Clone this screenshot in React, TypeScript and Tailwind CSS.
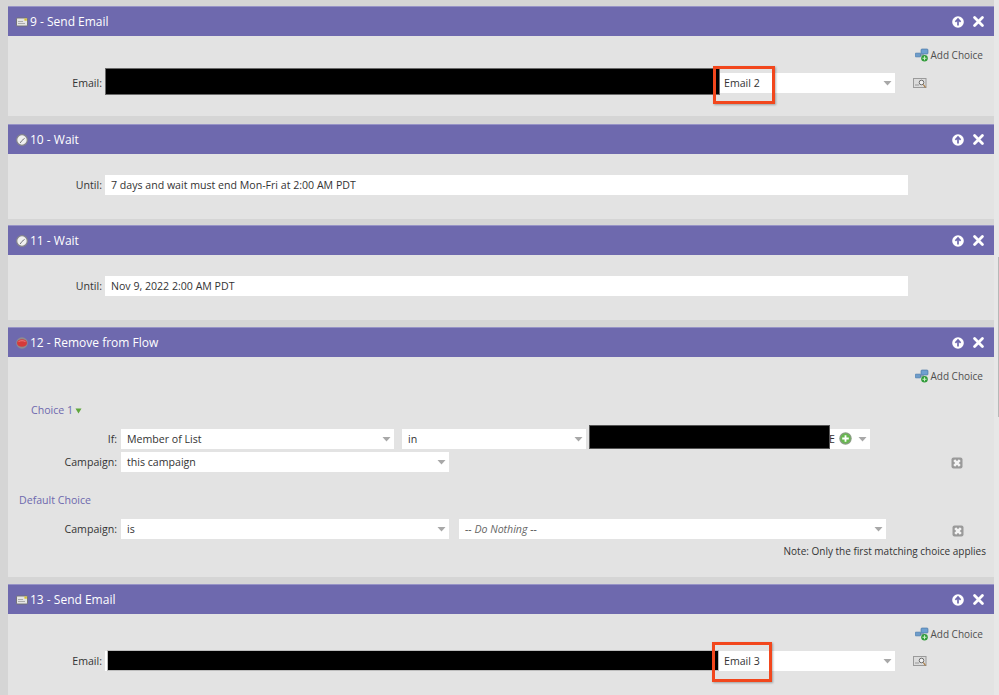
import React from "react";

const Caret = () => (
  <svg width="9" height="6" viewBox="0 0 9 6" className="shrink-0"><path d="M0.5 1h8L4.5 5.5z" fill="#a8a8a8" /></svg>
);

const MailIcon = () => (
  <svg width="12" height="10" viewBox="0 0 12 10" className="shrink-0">
    <rect x="0.5" y="1" width="11" height="8" rx="1" fill="#e4e4e4" stroke="#6f6f6f" strokeWidth="0.9" />
    <path d="M2 4.5h5M2 6.5h7" stroke="#9a9a9a" strokeWidth="0.8" />
    <rect x="8.4" y="1.5" width="2.4" height="2.2" fill="#d8c02e" />
  </svg>
);

const ClockIcon = () => (
  <svg width="12" height="12" viewBox="0 0 12 12" className="shrink-0">
    <circle cx="6" cy="6" r="5.3" fill="#f0f0f0" stroke="#86868a" strokeWidth="1.2" />
    <path d="M6 6.4l2.6-2M6 6.4L4.2 9" stroke="#77777d" strokeWidth="1" />
  </svg>
);

const StopIcon = () => (
  <svg width="12" height="12" viewBox="0 0 12 12" className="shrink-0">
    <circle cx="6" cy="6" r="5.8" fill="#8f8a90" />
    <ellipse cx="6" cy="6" rx="5" ry="3.8" fill="#d63a3a" />
    <path d="M2.5 4.6c2-1.2 5-1.2 7 0" stroke="#f08a8a" strokeWidth="0.8" fill="none" />
  </svg>
);

const UpIcon = () => (
  <svg width="12" height="12" viewBox="0 0 12 12" className="shrink-0">
    <circle cx="6" cy="6" r="5.8" fill="#fff" />
    <path d="M6 9.4V3.4M3.4 5.8L6 3l2.6 2.8" stroke="#6e69ae" strokeWidth="1.7" fill="none" />
  </svg>
);

const CloseIcon = () => (
  <svg width="11" height="11" viewBox="0 0 11 11" className="shrink-0">
    <path d="M1.6 1.6l7.8 7.8M9.4 1.6L1.6 9.4" stroke="#fff" strokeWidth="2.8" strokeLinecap="round" />
  </svg>
);

const AddChoiceIcon = () => (
  <svg width="14" height="14" viewBox="0 0 14 14" className="shrink-0">
    <rect x="0" y="5" width="6" height="4" rx="1" fill="#6f9cc9" stroke="#4f7ba6" strokeWidth="0.5" />
    <rect x="6" y="1" width="7" height="5" rx="1" fill="#6fa0d0" stroke="#3f6f9f" strokeWidth="0.6" />
    <path d="M5 7h4" stroke="#5a7a98" />
    <circle cx="9.5" cy="10.3" r="3.3" fill="#2f9a38" />
    <path d="M9.5 8.3v4M7.5 10.3h4" stroke="#c9efc4" strokeWidth="1.1" />
  </svg>
);

const LookupIcon = () => (
  <svg width="14" height="12" viewBox="0 0 14 12" className="shrink-0">
    <rect x="0.5" y="1.5" width="12.5" height="9" fill="#dcdcdc" stroke="#9a9a9a" />
    <path d="M2 8h4" stroke="#9a9a9a" />
    <circle cx="8.5" cy="5.5" r="2.3" fill="#f2f2f2" stroke="#6c6c6c" />
    <path d="M10.3 7.5l2.2 3" stroke="#a8763a" strokeWidth="1.2" />
  </svg>
);

const RemoveIcon = () => (
  <svg width="12" height="12" viewBox="0 0 12 12" className="shrink-0">
    <rect x="0.5" y="0.5" width="11" height="11" rx="2" fill="#9a9a9a" />
    <path d="M3.2 3.2l5.6 5.6M8.8 3.2L3.2 8.8" stroke="#f4f4f4" strokeWidth="2.6" />
  </svg>
);

const PlusIcon = () => (
  <svg width="13" height="13" viewBox="0 0 13 13" className="shrink-0">
    <circle cx="6.5" cy="6.5" r="6.2" fill="#8a9c84" />
    <circle cx="6.5" cy="6.5" r="5" fill="#67b84f" />
    <path d="M6.5 3.2v6.6M3.2 6.5h6.6" stroke="#fff" strokeWidth="1.8" />
  </svg>
);

function Panel({ icon, title, className, bodyClass, children }: { icon: React.ReactNode; title: string; className: string; bodyClass: string; children: React.ReactNode }) {
  return (
    <section className={`ml-2 w-[986px] ${className}`}>
      <header className="flex h-[30px] items-center border-t border-[#9793c6] bg-[#6e69ae] pl-2 pr-[10px] text-[12px] text-white">
        <span className="flex w-[14px] items-center">{icon}</span>
        <span>{title}</span>
        <span className="ml-auto flex items-center gap-[9px]"><UpIcon /><CloseIcon /></span>
      </header>
      <div className={`bg-[#e3e3e3] text-[10.6px] text-[#333] ${bodyClass}`}>{children}</div>
    </section>
  );
}

function AddChoice() {
  return (
    <div className="flex h-[14px] items-center justify-end pr-[11px]">
      <span className="mr-px"><AddChoiceIcon /></span>
      <span className="text-[10px] text-[#4f4f4f]">Add Choice</span>
    </div>
  );
}

function Field({ className, children, text, italic, caret = true }: { className: string; children?: React.ReactNode; text?: string; italic?: boolean; caret?: boolean }) {
  return (
    <div className={`relative flex h-[20px] shrink-0 items-center bg-white pr-[3px] ${className}`}>
      <span className={`flex-1 pt-px ${italic ? "italic text-[#666]" : "text-[#333]"}`}>{text}</span>
      {caret && <Caret />}
      {children}
    </div>
  );
}

function Label({ children, className }: { children: React.ReactNode; className: string }) {
  return <span className={`shrink-0 pt-px text-right text-[#333] ${className}`}>{children}</span>;
}

export default function App() {
  return (
    <main className="relative h-[695px] w-[999px] overflow-hidden bg-[#d5d5d5] pt-[6px] font-['Open_Sans',sans-serif]">
      <Panel icon={<MailIcon />} title="9 - Send Email" className="" bodyClass="h-[80px] pt-3">
        <AddChoice />
        <div className="mt-[11px] flex items-center">
          <Label className="w-[94px]">Email:</Label>
          <Field className="ml-[3px] w-[790px] pl-[619px] pr-[2px]" text="Email 2">
            <div className="absolute -top-[5px] left-0 h-[27px] w-[615px] border border-[#6a6a6a] bg-black" />
            <div className="absolute -top-[7px] left-[608px] h-[38px] w-[62px] border-[3px] border-[#f2471d] shadow-[1px_1px_2px_rgba(0,0,0,0.3)]" />
          </Field>
          <span className="ml-[18px]"><LookupIcon /></span>
        </div>
      </Panel>

      <Panel icon={<ClockIcon />} title="10 - Wait" className="mt-2" bodyClass="h-[65px] pt-[21px]">
        <div className="flex items-center">
          <Label className="w-[94px]">Until:</Label>
          <Field className="ml-[3px] w-[803px] pl-[6px]" text="7 days and wait must end Mon-Fri at 2:00 AM PDT" caret={false} />
        </div>
      </Panel>

      <Panel icon={<ClockIcon />} title="11 - Wait" className="mt-[6px]" bodyClass="h-[65px] pt-[21px]">
        <div className="flex items-center">
          <Label className="w-[94px]">Until:</Label>
          <Field className="ml-[3px] w-[803px] pl-[6px]" text="Nov 9, 2022 2:00 AM PDT" caret={false} />
        </div>
      </Panel>

      <Panel icon={<StopIcon />} title="12 - Remove from Flow" className="mt-[7px]" bodyClass="h-[220px] pt-3">
        <AddChoice />
        <div className="ml-[23px] mt-[21px] flex h-[14px] items-center gap-[2px] text-[#6e69ae]">
          Choice 1
          <svg width="7" height="6" viewBox="0 0 7 6"><path d="M0.5 0.5h6L3.5 5.5z" fill="#5fa63c" /></svg>
        </div>
        <div className="mt-[11px] flex items-center">
          <Label className="w-[109px]">If:</Label>
          <Field className="ml-1 w-[273px] pl-[6px]" text="Member of List" />
          <Field className="ml-2 w-[184px] pl-[6px]" text="in" />
          <Field className="ml-[3px] w-[281px] pl-[240px]" text="E">
            <span className="absolute left-[250px] top-[3px]"><PlusIcon /></span>
            <div className="absolute -top-[4px] left-0 h-[24px] w-[241px] border border-[#555] bg-black" />
          </Field>
        </div>
        <div className="mt-[3px] flex items-center">
          <Label className="w-[109px]">Campaign:</Label>
          <Field className="ml-1 w-[328px] pl-[6px]" text="this campaign" />
          <span className="ml-[502px] mt-[2px]"><RemoveIcon /></span>
        </div>
        <div className="ml-[11px] mt-[22px] flex h-[14px] items-center text-[#6e69ae]">Default Choice</div>
        <div className="mt-[11px] flex items-center">
          <Label className="w-[109px]">Campaign:</Label>
          <Field className="ml-1 w-[328px] pl-[6px]" text="is" />
          <Field className="ml-[10px] w-[427px] pl-[6px]" text="-- Do Nothing --" italic />
          <span className="ml-[66px] mt-[4px]"><RemoveIcon /></span>
        </div>
        <div className="mt-[5px] pr-2 text-right text-[10px]">Note: Only the first matching choice applies</div>
      </Panel>

      <Panel icon={<MailIcon />} title="13 - Send Email" className="mt-[7px]" bodyClass="h-[90px] pt-[13px]">
        <AddChoice />
        <div className="mt-[10px] flex items-center">
          <Label className="w-[94px]">Email:</Label>
          <Field className="ml-[3px] w-[790px] pl-[619px] pr-[2px]" text="Email 3">
            <div className="absolute -top-px left-[2px] h-[21px] w-[612px] border border-[#bdbdbd] bg-black" />
            <div className="absolute -top-[9px] left-[607px] h-[40px] w-[60px] border-[3px] border-[#f2471d] shadow-[1px_1px_2px_rgba(0,0,0,0.3)]" />
          </Field>
          <span className="ml-[18px]"><LookupIcon /></span>
        </div>
      </Panel>

      <div className="absolute inset-y-0 right-0 w-[5px] bg-[#e7e7e7]">
        <div className="absolute right-0 top-[257px] h-[160px] w-px bg-[#b8b8b8]" />
      </div>
    </main>
  );
}
